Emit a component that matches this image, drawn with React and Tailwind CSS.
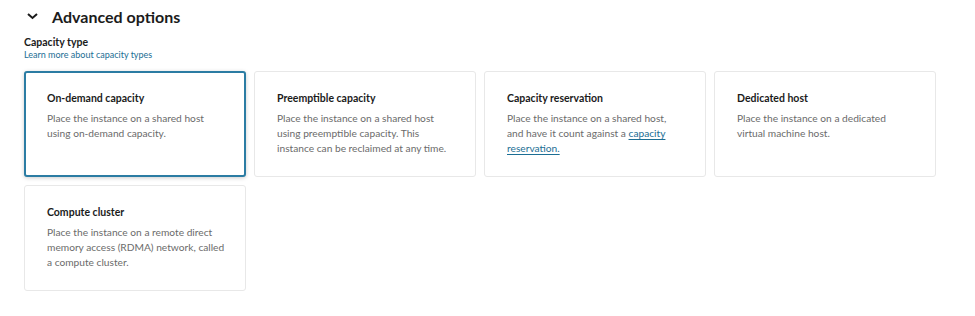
const options = [
  {
    title: "On-demand capacity",
    lines: ["Place the instance on a shared host", "using on-demand capacity."],
    selected: true,
  },
  {
    title: "Preemptible capacity",
    lines: ["Place the instance on a shared host", "using preemptible capacity. This", "instance can be reclaimed at any time."],
  },
  {
    title: "Capacity reservation",
    lines: [
      "Place the instance on a shared host,",
      <>
        and have it count against a{" "}
        <a href="#" className="text-[#1c6e94] underline underline-offset-2">
          capacity
        </a>
      </>,
      <a href="#" className="text-[#1c6e94] underline underline-offset-2">
        reservation.
      </a>,
    ],
  },
  {
    title: "Dedicated host",
    lines: ["Place the instance on a dedicated", "virtual machine host."],
  },
  {
    title: "Compute cluster",
    lines: ["Place the instance on a remote direct", "memory access (RDMA) network, called", "a compute cluster."],
  },
];

const OptionCard = ({ title, lines, selected }) => (
  <div
    className={`rounded-[3px] bg-white ${
      selected
        ? "border-2 border-[#2b7ca3] pl-[21px] pt-[18px] shadow-[0_1px_4px_rgba(0,0,0,0.2)]"
        : "border border-[#e8e8e8] pl-[22px] pt-[19px]"
    }`}
  >
    <div className="text-[10.5px] font-bold leading-[14px] text-[#1b1b1b]">{title}</div>
    <p className="mt-[6px] whitespace-nowrap text-[10.2px] leading-[15px] text-[#6b6b6b]">
      {lines.map((l, i) => (
        <span key={i} className="block">
          {l}
        </span>
      ))}
    </p>
  </div>
);

export default function App() {
  return (
    <div className="min-h-[316px] bg-white pl-[24px] pt-[6px]" style={{ fontFamily: 'Lato, sans-serif' }}>
      <div className="flex h-[22px] items-center gap-[13px]">
        <svg width="13" height="10" viewBox="0 0 13 10" className="ml-[2px] mt-[-2px]">
          <path d="M2 3 L6.5 7 L11 3" fill="none" stroke="#1b1b1b" strokeWidth="2" />
        </svg>
        <h2 className="mt-[-1px] text-[16px] font-bold leading-[22px] text-[#1b1b1b]">Advanced options</h2>
      </div>
      <div className="mt-[8px] text-[10.5px] font-bold leading-[13px] text-[#1b1b1b]">Capacity type</div>
      <a href="#" className="block text-[9px] leading-[12px] text-[#1c6e94]">
        Learn more about capacity types
      </a>
      <div className="mt-[10px] grid w-[912px] auto-rows-[106px] grid-cols-4 gap-[8px]">
        {options.map((o) => (
          <OptionCard key={o.title} {...o} />
        ))}
      </div>
    </div>
  );
}
